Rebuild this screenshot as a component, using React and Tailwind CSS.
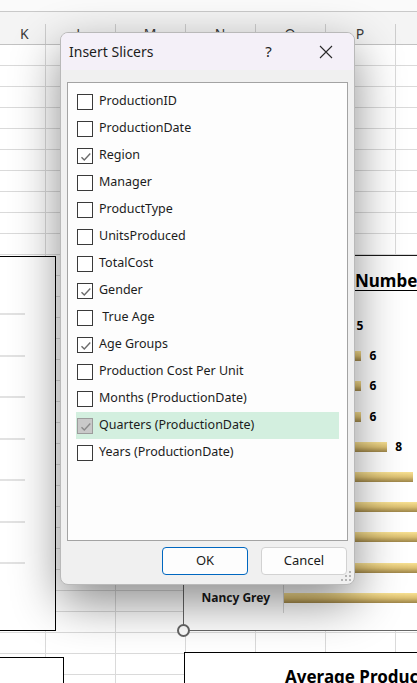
import React from "react";

const fields = [
  { name: "ProductionID" },
  { name: "ProductionDate" },
  { name: "Region", checked: true },
  { name: "Manager" },
  { name: "ProductType" },
  { name: "UnitsProduced" },
  { name: "TotalCost" },
  { name: "Gender", checked: true },
  { name: " True Age" },
  { name: "Age Groups", checked: true },
  { name: "Production Cost Per Unit" },
  { name: "Months (ProductionDate)" },
  { name: "Quarters (ProductionDate)", checked: true, active: true },
  { name: "Years (ProductionDate)" },
];

// values past the right edge of the window keep no visible label
const bars = [
  { label: "", value: 5, shown: true },
  { label: "", value: 6, shown: true },
  { label: "", value: 6, shown: true },
  { label: "", value: 6, shown: true },
  { label: "", value: 8, shown: true },
  { label: "", value: 10 },
  { label: "", value: 13 },
  { label: "", value: 13 },
  { label: "", value: 14 },
  { label: "Nancy Grey", value: 15 },
];

const columns = ["K", "L", "M", "N", "O", "P", ""];
const colWidths = ["w-[46px]", "w-[70px]", "w-[70px]", "w-[70px]", "w-[70px]", "w-[70px]", "w-[70px]"];

function CheckMark({ color }) {
  return (
    <svg width="16" height="16" viewBox="0 0 16 16" className="block">
      <path d="M3.5 8.2 L6.3 11 L12.3 4.6" fill="none" stroke={color} strokeWidth="1.4" />
    </svg>
  );
}

function FieldRow({ field }) {
  return (
    <div className={`flex h-[27px] items-center ${field.active ? "bg-[#d3efdf]" : ""}`}>
      <div
        className={`ml-[1px] h-4 w-4 shrink-0 border ${
          field.active ? "border-[#9c9c9c] bg-[#c9c9c9]" : "border-[#3a3a3a] bg-white"
        }`}
      >
        {field.checked && <CheckMark color={field.active ? "#8a8a8a" : "#6b6b6b"} />}
      </div>
      <span className="ml-[6px] whitespace-pre text-[12.5px] text-[#1c1c1c]">{field.name}</span>
    </div>
  );
}

function Sheet() {
  return (
    <div>
      <div className="h-[12px] border-b border-[#c9c9c9] bg-[#fafafa]" />
      <div className="h-[12px] bg-[#f4f4f4]" />
      <div className="flex h-[21px] border-b border-[#c2c2c2] bg-[#f4f4f4]">
        {columns.map((c, i) => (
          <div
            key={i}
            className={`${colWidths[i]} shrink-0 border-r border-[#cdcdcd] pr-[1px] text-center text-[14px] leading-[20px] text-[#3a3a3a] ${
              i === 0 ? "pl-[20px] text-left" : ""
            }`}
          >
            {c}
          </div>
        ))}
      </div>
      {Array.from({ length: 31 }).map((_, r) => (
        <div key={r} className="flex h-[21px] border-b border-[#dadada]">
          {colWidths.map((w, i) => (
            <div key={i} className={`${w} shrink-0 border-r border-[#dadada]`} />
          ))}
        </div>
      ))}
    </div>
  );
}

function BarChart() {
  return (
    <div className="absolute left-[183px] top-[255px] h-[376px] w-[260px] overflow-hidden border border-[#666] border-t-[#1a1a1a] bg-white">
      <div className="whitespace-nowrap pl-[171px] pt-[14px] text-[17px] font-bold leading-[22px] text-black underline underline-offset-[3px]">
        Number of Units
      </div>
      <div className="mt-[19px]">
        {bars.map((b, i) => (
          <div key={i} className="flex h-[30.2px] items-center">
            <div className="w-[99px] shrink-0 pr-[13px] text-right text-[12px] font-bold text-[#1a1a1a]">
              {b.label}
            </div>
            <div className="flex h-full items-center border-l border-[#d6d6d6]">
              <div
                className="h-[10px] shrink-0 bg-linear-to-b from-[#f8e193] via-[#dcc072] to-[#9d8549]"
                style={{ width: `${b.value * 12.9}px` }}
              />
              {b.shown && <span className="ml-[8px] text-[12px] font-bold text-black">{b.value}</span>}
            </div>
          </div>
        ))}
      </div>
    </div>
  );
}

function SlicerDialog() {
  return (
    <div className="absolute left-[60px] top-[32px] flex h-[553px] w-[295px] flex-col overflow-hidden rounded-[8px] border border-[#b9b9b9] bg-[#f0f0f0] shadow-[0_18px_48px_rgba(0,0,0,0.45)]">
      <div className="flex h-[37px] shrink-0 items-center bg-[#f4f0f8]">
        <span className="flex-1 pl-[8px] text-[14px] text-[#1c1c1c]">Insert Slicers</span>
        <button className="flex h-full w-[57px] items-center justify-center text-[15px] text-[#222]">?</button>
        <button className="flex h-full w-[57px] items-center justify-center">
          <svg width="14" height="14" viewBox="0 0 14 14">
            <path d="M1 1 L13 13 M13 1 L1 13" stroke="#2a2a2a" strokeWidth="1.1" />
          </svg>
        </button>
      </div>
      <div className="flex flex-1 flex-col px-[6px] pt-[12px]">
        <div className="h-[459px] border border-[#a3a3a3] bg-[#fdfdfd] px-[8px] pt-[5px]">
          {fields.map((f) => (
            <FieldRow key={f.name} field={f} />
          ))}
        </div>
        <div className="mt-[6px] flex justify-end gap-[13px] pr-[1px]">
          <button className="h-[28px] w-[86px] rounded-[4px] border border-[#0067c0] bg-[#fdfdfd] text-[13px] text-[#1a1a1a]">
            OK
          </button>
          <button className="h-[28px] w-[86px] rounded-[4px] border border-[#d2d2d2] bg-[#fdfdfd] text-[13px] text-[#1a1a1a]">
            Cancel
          </button>
        </div>
      </div>
      <svg className="absolute bottom-[2px] right-[2px]" width="11" height="11" viewBox="0 0 11 11">
        <rect x="8" y="0" width="2" height="2" fill="#b4b4b4" />
        <rect x="4" y="4" width="2" height="2" fill="#b4b4b4" />
        <rect x="8" y="4" width="2" height="2" fill="#b4b4b4" />
        <rect x="0" y="8" width="2" height="2" fill="#b4b4b4" />
        <rect x="4" y="8" width="2" height="2" fill="#b4b4b4" />
        <rect x="8" y="8" width="2" height="2" fill="#b4b4b4" />
      </svg>
    </div>
  );
}

export default function App() {
  return (
    <div className="relative h-[683px] w-[417px] overflow-hidden bg-white font-['Noto_Sans',sans-serif]">
      <Sheet />

      {/* chart on the left */}
      <div className="absolute left-[-20px] top-[256px] h-[375px] w-[76px] border border-black bg-white pt-[56px]">
        {Array.from({ length: 7 }).map((_, i) => (
          <div key={i} className="h-[41.5px] w-[44px] border-t-2 border-[#e2e2e2]" />
        ))}
      </div>

      <BarChart />
      <div className="absolute left-[177px] top-[624px] h-[13px] w-[13px] rounded-full border-2 border-[#666] bg-white" />

      <div className="absolute left-[-20px] top-[657px] h-[60px] w-[84px] border border-black bg-white" />
      <div className="absolute left-[184px] top-[652px] h-[80px] w-[260px] overflow-hidden whitespace-nowrap border border-black bg-white pl-[100px] pt-[11px] text-[17px] font-bold text-black">
        Average Production Cost
      </div>

      <SlicerDialog />
    </div>
  );
}
